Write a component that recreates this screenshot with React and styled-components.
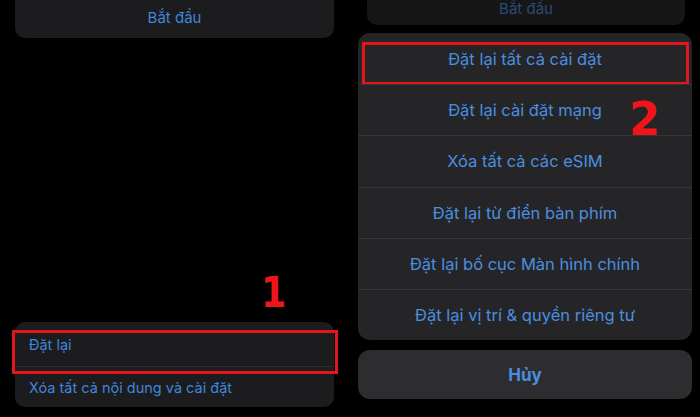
import React from "react";
import styled, { createGlobalStyle } from "styled-components";

const Global = createGlobalStyle`
  html, body { margin: 0; padding: 0; background: #000; }
  body { font-family: Inter, "Noto Sans", "Liberation Sans", sans-serif; }
  *, *::before, *::after { box-sizing: border-box; }
  #root { width: 700px; height: 417px; overflow: hidden; }
`;

const Page = styled.div`
  display: grid;
  grid-template-columns: 350px 350px;
  width: 700px;
  height: 417px;
  background: #000;
`;

const LeftPane = styled.div`
  position: relative;
  display: flex;
  flex-direction: column;
  justify-content: space-between;
  padding: 0 16px 10px 15px;
`;

const RightPane = styled.div`
  position: relative;
  display: flex;
  flex-direction: column;
  padding: 0 8px 0 8px;
`;

const TopStub = styled.div`
  height: ${(p) => p.$h}px;
  margin: 0 ${(p) => p.$mr || 0}px 0 ${(p) => p.$ml || 0}px;
  background: ${(p) => p.$bg};
  border-radius: 0 0 10px 10px;
  display: flex;
  align-items: center;
  justify-content: center;
  color: ${(p) => p.$color};
  font-size: 15px;
  padding-bottom: ${(p) => p.$pb || 0}px;
`;

const ListCard = styled.div`
  background: #1c1c1e;
  border-radius: 10px;
  display: flex;
  flex-direction: column;
`;

const ListRow = styled.div`
  position: relative;
  height: ${(p) => p.$h}px;
  display: flex;
  align-items: center;
  padding-left: 14px;
  color: #3f86dc;
  font-size: 14.5px;
  & + & { border-top: 1px solid #2c2c2e; }
`;

const Sheet = styled.div`
  margin-top: 8px;
  background: #252527;
  border-radius: 12px;
  display: flex;
  flex-direction: column;
`;

const SheetRow = styled.div`
  position: relative;
  height: 51.2px;
  display: flex;
  align-items: center;
  justify-content: center;
  color: #4a8ee0;
  font-size: 16.5px;
  & + & { border-top: 1px solid #353537; }
`;

const CancelButton = styled.div`
  margin-top: 10px;
  height: 49px;
  background: #2d2d2f;
  border-radius: 12px;
  display: flex;
  align-items: center;
  justify-content: center;
  color: #4a8ee0;
  font-size: 17px;
  font-weight: 700;
`;

const Highlight = styled.div`
  position: absolute;
  top: ${(p) => p.$t}px;
  bottom: ${(p) => p.$b}px;
  left: ${(p) => p.$l}px;
  right: ${(p) => p.$r}px;
  border: 3px solid #e3161d;
  pointer-events: none;
`;

const Step = styled.div`
  position: absolute;
  left: ${(p) => p.$x}px;
  top: ${(p) => p.$y}px;
  color: #f0141b;
  font-family: "DejaVu Sans", "Liberation Sans", sans-serif;
  font-weight: 900;
  font-size: ${(p) => p.$size}px;
  line-height: 1;
  transform: scaleX(${(p) => p.$sx || 1});
  transform-origin: left top;
`;

const sheetItems = [
  "Đặt lại tất cả cài đặt",
  "Đặt lại cài đặt mạng",
  "Xóa tất cả các eSIM",
  "Đặt lại từ điển bàn phím",
  "Đặt lại bố cục Màn hình chính",
  "Đặt lại vị trí & quyền riêng tư",
];

export default function App() {
  return (
    <>
      <Global />
      <Page>
        <LeftPane>
          <TopStub $h={38} $bg="#1c1c1e" $color="#3f86dc" $pb={4}>
            Bắt đầu
          </TopStub>
          <ListCard>
            <ListRow $h={44}>
              Đặt lại
              <Highlight $t={8} $b={-8} $l={-3} $r={-4} />
            </ListRow>
            <ListRow $h={41}>Xóa tất cả nội dung và cài đặt</ListRow>
          </ListCard>
          <Step $x={261} $y={271} $size={43} $sx={0.85}>1</Step>
        </LeftPane>
        <RightPane>
          <TopStub $h={25} $ml={9} $mr={7} $bg="#161617" $color="#2a4b74" $pb={8}>
            Bắt đầu
          </TopStub>
          <Sheet>
            {sheetItems.map((t, i) => (
              <SheetRow key={t}>
                {t}
                {i === 0 && <Highlight $t={9} $b={-1} $l={4} $r={3} />}
              </SheetRow>
            ))}
          </Sheet>
          <CancelButton>Hủy</CancelButton>
          <Step $x={279} $y={95} $size={47} $sx={0.95}>2</Step>
        </RightPane>
      </Page>
    </>
  );
}
